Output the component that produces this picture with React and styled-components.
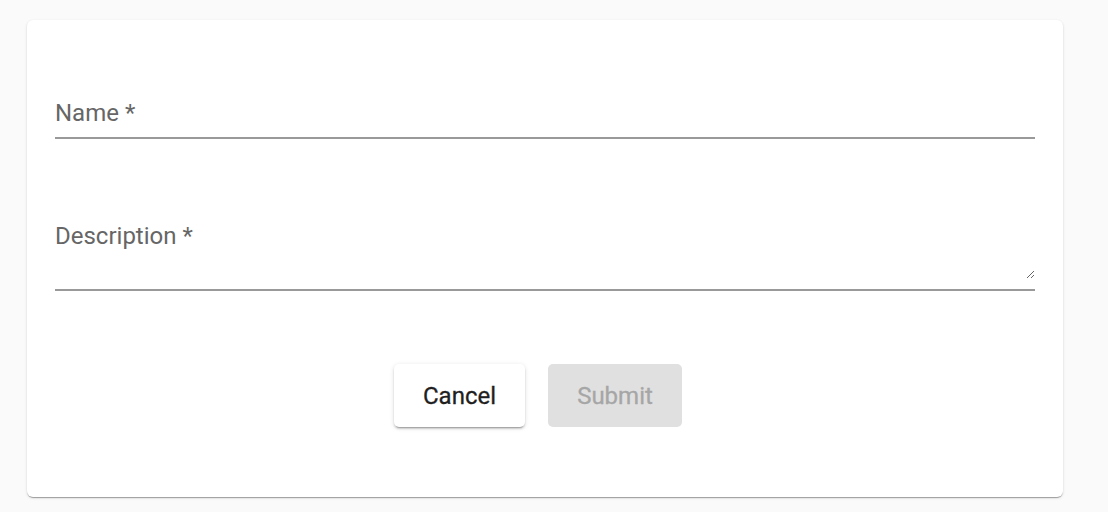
import React from "react";
import styled, { createGlobalStyle } from "styled-components";

const GlobalStyle = createGlobalStyle`
  html, body {
    margin: 0;
    padding: 0;
    background: #fafafa;
    font-family: Roboto, "Liberation Sans", sans-serif;
  }
`;

const Page = styled.div`
  padding: 20px 45px 15px 27px;
`;

const Card = styled.form`
  background: #fff;
  border-radius: 6px;
  box-shadow: 0 2px 1px -1px rgba(0, 0, 0, 0.2), 0 1px 1px 0 rgba(0, 0, 0, 0.14),
    0 1px 3px 0 rgba(0, 0, 0, 0.12);
  padding: 81px 28px 70px;
  display: flex;
  flex-direction: column;
`;

const Field = styled.div`
  border-bottom: 2px solid #999;
  padding-bottom: ${(p) => p.$pad || 0}px;
  margin-bottom: ${(p) => p.$gap || 0}px;
`;

const fieldText = `
  display: block;
  width: 100%;
  box-sizing: border-box;
  border: none;
  outline: none;
  background: transparent;
  font-family: Roboto, "Liberation Sans", sans-serif;
  font-size: 24px;
  line-height: 24px;
  color: #222;
  &::placeholder {
    color: #666;
    opacity: 1;
  }
`;

const TextInput = styled.input`
  ${fieldText}
  height: 36px;
  padding: 0 0 12px;
`;

const TextArea = styled.textarea`
  ${fieldText}
  height: 55px;
  padding: 0 2px 0 0;
  resize: vertical;
`;

const Actions = styled.div`
  display: flex;
  justify-content: center;
  gap: 23px;
  padding-right: 14px;
`;

const Button = styled.button`
  height: 63px;
  min-width: ${(p) => p.$w}px;
  border: none;
  border-radius: 5px;
  font-family: Roboto, "Liberation Sans", sans-serif;
  font-size: 24px;
  font-weight: 400;
  -webkit-text-stroke: 0.3px currentColor;
  background: ${(p) => (p.disabled ? "#e0e0e0" : "#fff")};
  color: ${(p) => (p.disabled ? "#a6a6a6" : "#1f1f1f")};
  box-shadow: ${(p) =>
    p.disabled
      ? "none"
      : "0 3px 1px -2px rgba(0,0,0,0.2), 0 2px 2px 0 rgba(0,0,0,0.14), 0 1px 5px 0 rgba(0,0,0,0.12)"};
  cursor: ${(p) => (p.disabled ? "default" : "pointer")};
`;

export default function App() {
  return (
    <>
      <GlobalStyle />
      <Page>
        <Card onSubmit={(e) => e.preventDefault()}>
          <Field $gap={85}>
            <TextInput placeholder="Name *" />
          </Field>
          <Field $gap={73} $pad={10}>
            <TextArea placeholder="Description *" />
          </Field>
          <Actions>
            <Button type="button" $w={131}>
              Cancel
            </Button>
            <Button type="submit" $w={134} disabled>
              Submit
            </Button>
          </Actions>
        </Card>
      </Page>
    </>
  );
}
